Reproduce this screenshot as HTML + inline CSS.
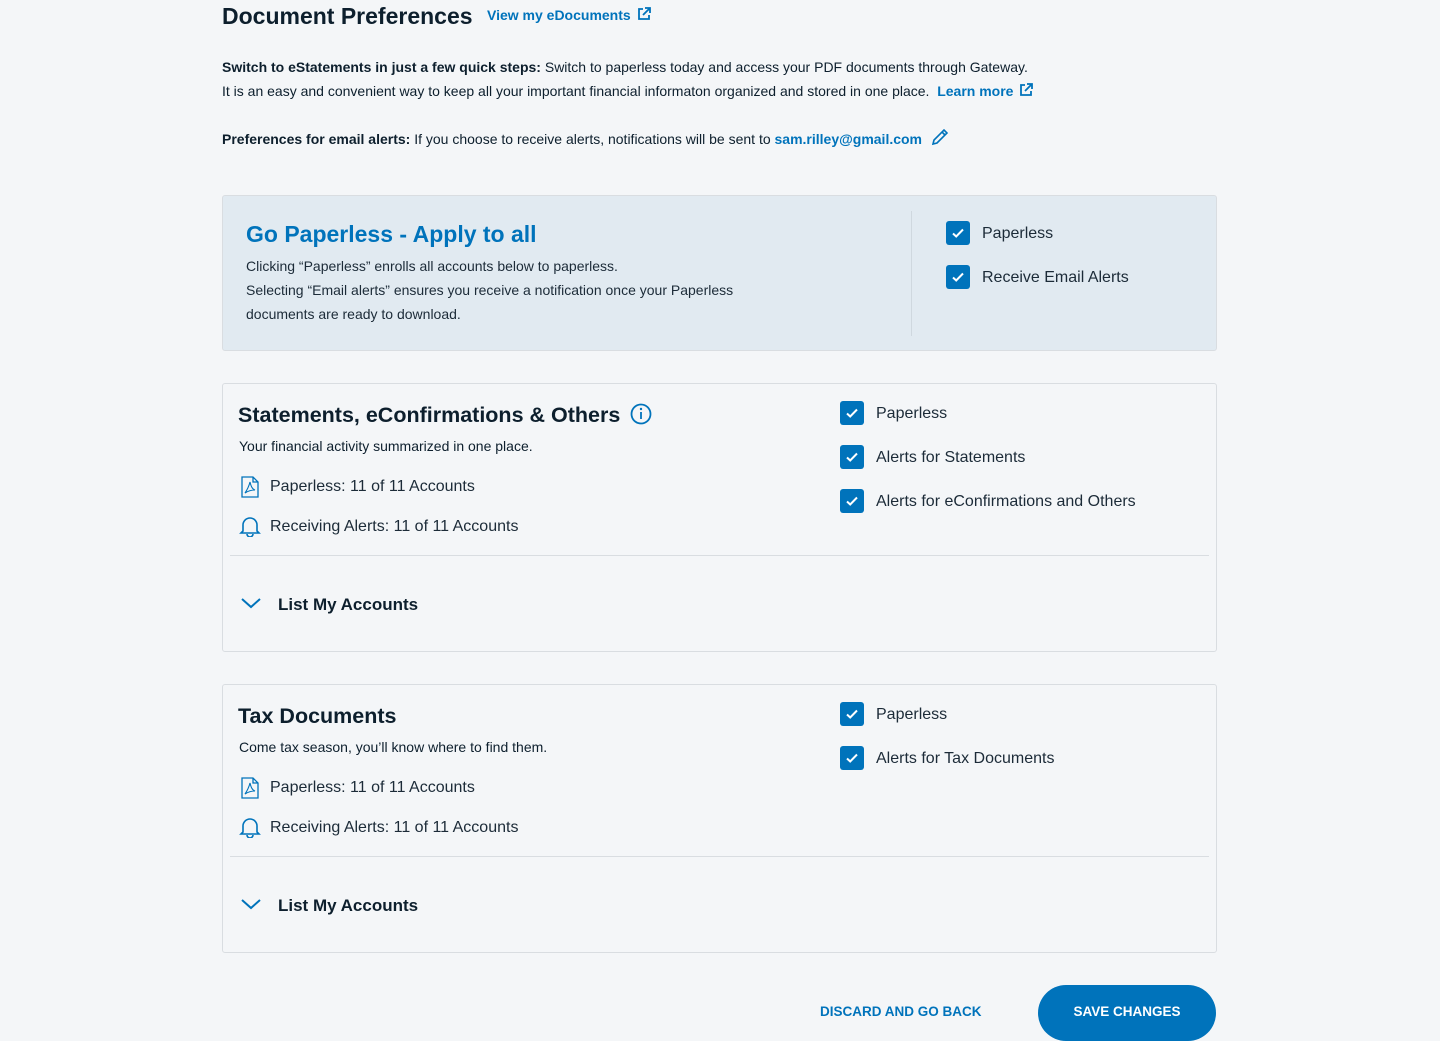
<!DOCTYPE html>
<html><head><meta charset="utf-8"><style>
*{box-sizing:border-box;margin:0;padding:0}
body{width:1440px;height:1041px;background:#f4f6f8;font-family:"Liberation Sans",sans-serif;color:#0d1f2d;position:relative;overflow:hidden}
.a{position:absolute;white-space:nowrap}
.blue{color:#0073bb}
.t14{font-size:14px}
.card{position:absolute;left:222px;width:995px;border:1px solid #d9dde1;border-radius:3px;background:#f4f6f8}
.cb{position:absolute;width:24px;height:24px;background:#0073bb;border-radius:3px}
.cb svg{position:absolute;left:4px;top:4px}
.lbl{font-size:16px;color:#1c2b38}
.h2{font-size:21.5px;font-weight:bold}
.hr{position:absolute;left:7px;right:7px;height:1px;background:#d9dde1}
</style></head><body>
<div class="a" style="left:222px;top:3px;font-size:23px;font-weight:bold">Document Preferences</div>
<div class="a blue" style="left:487px;top:7px;font-size:14px;font-weight:bold">View my eDocuments
<svg width="14" height="14" viewBox="0 0 14 14" style="vertical-align:-1px;margin-left:2px"><path d="M6 2H2v10h10V8M8 1h5v5M13 1L6 8" fill="none" stroke="#0073bb" stroke-width="1.8"/></svg></div>
<div class="a t14" style="left:222px;top:59px"><b>Switch to eStatements in just a few quick steps:</b> Switch to paperless today and access your PDF documents through Gateway.</div>
<div class="a t14" style="left:222px;top:83px">It is an easy and convenient way to keep all your important financial informaton organized and stored in one place. &nbsp;<b class="blue">Learn more</b>
<svg width="14" height="14" viewBox="0 0 14 14" style="vertical-align:-1px;margin-left:2px"><path d="M6 2H2v10h10V8M8 1h5v5M13 1L6 8" fill="none" stroke="#0073bb" stroke-width="1.8"/></svg></div>
<div class="a t14" style="left:222px;top:127px"><b>Preferences for email alerts:</b> If you choose to receive alerts, notifications will be sent to <b class="blue">sam.rilley@gmail.com</b>
<svg width="20" height="20" viewBox="0 0 20 20" style="vertical-align:-3px;margin-left:4px"><path d="M3 17l1-4L14 3l3 3L7 16zM12 5l3 3" fill="none" stroke="#0073bb" stroke-width="1.6"/></svg></div>

<div class="card" style="top:195px;height:156px;background:#e1eaf1">
<div class="a" style="left:23px;top:25px;font-size:23px;font-weight:bold;color:#0073bb">Go Paperless - Apply to all</div>
<div class="a t14" style="left:23px;top:58px;line-height:24px;color:#1c2b38">Clicking “Paperless” enrolls all accounts below to paperless.<br>Selecting “Email alerts” ensures you receive a notification once your Paperless<br>documents are ready to download.</div>
<div class="a" style="left:688px;top:15px;width:1px;height:125px;background:#cfd8df"></div>
<div class="cb" style="left:723px;top:25px"><svg width="16" height="16" viewBox="0 0 16 16"><path d="M3 8.5l3.2 3L13 4.5" fill="none" stroke="#fff" stroke-width="2"/></svg></div>
<div class="a lbl" style="left:759px;top:29px">Paperless</div>
<div class="cb" style="left:723px;top:69px"><svg width="16" height="16" viewBox="0 0 16 16"><path d="M3 8.5l3.2 3L13 4.5" fill="none" stroke="#fff" stroke-width="2"/></svg></div>
<div class="a lbl" style="left:759px;top:73px">Receive Email Alerts</div>
</div>

<div class="card" style="top:383px;height:269px">
<div class="a h2" style="left:15px;top:19px">Statements, eConfirmations &amp; Others
<svg width="22" height="22" viewBox="0 0 22 22" style="vertical-align:-3px;margin-left:4px"><circle cx="11" cy="11" r="9.5" fill="none" stroke="#0073bb" stroke-width="1.8"/><path d="M11 9v7" stroke="#0073bb" stroke-width="1.8"/><circle cx="11" cy="6" r="1.2" fill="#0073bb"/></svg></div>
<div class="a t14" style="left:16px;top:54px">Your financial activity summarized in one place.</div>
<svg class="a" style="left:18px;top:92px" width="18" height="22" viewBox="0 0 18 22"><path d="M1 1h11l5 5v15H1zM12 1v5h5" fill="none" stroke="#0073bb" stroke-width="1.3"/><path d="M9 6c-1 4-3 8-5 11 3-2 6-3 10-3-3-1-4-4-5-8z" fill="none" stroke="#0073bb" stroke-width="1.1"/></svg>
<div class="a lbl" style="left:47px;top:94px">Paperless: 11 of 11 Accounts</div>
<svg class="a" style="left:16px;top:131px" width="22" height="22" viewBox="0 0 22 22"><path d="M4 16V10a7 7 0 0114 0v6l2 2H2zM8 19a3 3 0 006 0" fill="none" stroke="#0073bb" stroke-width="1.6"/></svg>
<div class="a lbl" style="left:47px;top:134px">Receiving Alerts: 11 of 11 Accounts</div>
<div class="hr" style="top:171px"></div>
<svg class="a" style="left:17px;top:212px" width="22" height="14" viewBox="0 0 22 14"><path d="M2 3l9 8 9-8" fill="none" stroke="#0073bb" stroke-width="2"/></svg>
<div class="a" style="left:55px;top:211px;font-size:17px;font-weight:bold">List My Accounts</div>
<div class="cb" style="left:617px;top:17px"><svg width="16" height="16" viewBox="0 0 16 16"><path d="M3 8.5l3.2 3L13 4.5" fill="none" stroke="#fff" stroke-width="2"/></svg></div>
<div class="a lbl" style="left:653px;top:21px">Paperless</div>
<div class="cb" style="left:617px;top:61px"><svg width="16" height="16" viewBox="0 0 16 16"><path d="M3 8.5l3.2 3L13 4.5" fill="none" stroke="#fff" stroke-width="2"/></svg></div>
<div class="a lbl" style="left:653px;top:65px">Alerts for Statements</div>
<div class="cb" style="left:617px;top:105px"><svg width="16" height="16" viewBox="0 0 16 16"><path d="M3 8.5l3.2 3L13 4.5" fill="none" stroke="#fff" stroke-width="2"/></svg></div>
<div class="a lbl" style="left:653px;top:109px">Alerts for eConfirmations and Others</div>
</div>

<div class="card" style="top:684px;height:269px">
<div class="a h2" style="left:15px;top:19px">Tax Documents</div>
<div class="a t14" style="left:16px;top:54px">Come tax season, you’ll know where to find them.</div>
<svg class="a" style="left:18px;top:92px" width="18" height="22" viewBox="0 0 18 22"><path d="M1 1h11l5 5v15H1zM12 1v5h5" fill="none" stroke="#0073bb" stroke-width="1.3"/><path d="M9 6c-1 4-3 8-5 11 3-2 6-3 10-3-3-1-4-4-5-8z" fill="none" stroke="#0073bb" stroke-width="1.1"/></svg>
<div class="a lbl" style="left:47px;top:94px">Paperless: 11 of 11 Accounts</div>
<svg class="a" style="left:16px;top:131px" width="22" height="22" viewBox="0 0 22 22"><path d="M4 16V10a7 7 0 0114 0v6l2 2H2zM8 19a3 3 0 006 0" fill="none" stroke="#0073bb" stroke-width="1.6"/></svg>
<div class="a lbl" style="left:47px;top:134px">Receiving Alerts: 11 of 11 Accounts</div>
<div class="hr" style="top:171px"></div>
<svg class="a" style="left:17px;top:212px" width="22" height="14" viewBox="0 0 22 14"><path d="M2 3l9 8 9-8" fill="none" stroke="#0073bb" stroke-width="2"/></svg>
<div class="a" style="left:55px;top:211px;font-size:17px;font-weight:bold">List My Accounts</div>
<div class="cb" style="left:617px;top:17px"><svg width="16" height="16" viewBox="0 0 16 16"><path d="M3 8.5l3.2 3L13 4.5" fill="none" stroke="#fff" stroke-width="2"/></svg></div>
<div class="a lbl" style="left:653px;top:21px">Paperless</div>
<div class="cb" style="left:617px;top:61px"><svg width="16" height="16" viewBox="0 0 16 16"><path d="M3 8.5l3.2 3L13 4.5" fill="none" stroke="#fff" stroke-width="2"/></svg></div>
<div class="a lbl" style="left:653px;top:65px">Alerts for Tax Documents</div>
</div>

<div class="a blue" style="left:820px;top:1004px;font-size:13.5px;font-weight:bold">DISCARD AND GO BACK</div>
<div class="a" style="left:1038px;top:985px;width:178px;height:56px;border-radius:28px;background:#0073bb;color:#fff;font-size:13.5px;font-weight:bold;text-align:center;line-height:54px">SAVE CHANGES</div>
</body></html>
